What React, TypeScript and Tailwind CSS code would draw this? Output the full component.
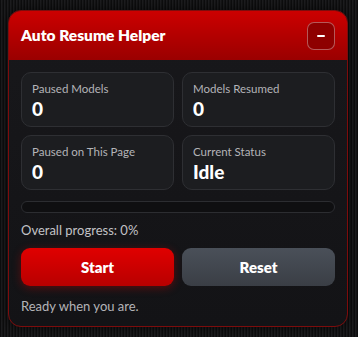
import React from "react";

function Stat({ label, value, big }: { label: string; value: string; big?: boolean }) {
  return (
    <div className="flex h-[55px] flex-col rounded-[10px] border border-[#2e2f33] bg-[#1c1d20] px-[10px] pt-[8px]">
      <div className="text-[11.5px] leading-[16px] text-[#b4b4b8]">{label}</div>
      <div className={`${big ? "text-[19px]" : "text-[19px]"} mt-[1px] font-black leading-[22px] text-white`}>{value}</div>
    </div>
  );
}

export default function App() {
  return (
    <div
      className="h-[337px] w-[358px] bg-[repeating-linear-gradient(90deg,#0d0d0e_0px,#0d0d0e_1px,#1d1d1f_1px,#1d1d1f_2px,#151516_2px,#151516_3px)] pt-[10px] pl-[8px]"
      style={{ fontFamily: "Lato, 'Noto Sans', sans-serif" }}
    >
      <div className="w-[340px] overflow-hidden rounded-[13px] border border-[#7d0c0c] bg-[linear-gradient(180deg,#18181b,#131316)] shadow-[0_0_12px_rgba(0,0,0,0.6)]">
        <div className="flex h-[49px] items-center justify-between bg-[linear-gradient(180deg,#cc0000,#9a0000)] pl-[12px] pr-[12px]">
          <div className="text-[15.5px] font-extrabold tracking-[0px] text-white">Auto Resume Helper</div>
          <div className="flex h-[28px] w-[28px] items-center justify-center rounded-[7px] border border-[rgba(255,255,255,0.35)] bg-[#8e0000]">
            <div className="h-[2px] w-[8px] rounded-sm bg-white" />
          </div>
        </div>
        <div className="flex flex-col px-[12px] pt-[12px] pb-[12px]">
          <div className="grid grid-cols-2 gap-[8px]">
            <Stat label="Paused Models" value="0" />
            <Stat label="Models Resumed" value="0" />
            <Stat label="Paused on This Page" value="0" />
            <Stat label="Current Status" value="Idle" big />
          </div>
          <div className="mt-[11px] h-[12px] rounded-full border border-[#2c2d31] bg-[#0f0f11]" />
          <div className="mt-[9px] text-[13px] leading-[16px] text-[#c2c2c6]">Overall progress: 0%</div>
          <div className="mt-[10px] grid grid-cols-2 gap-[8px]">
            <button className="h-[38px] rounded-[9px] bg-[linear-gradient(180deg,#e00000,#b80000)] text-[15px] font-extrabold text-white shadow-[0_2px_8px_rgba(220,0,0,0.35)]">
              Start
            </button>
            <button className="h-[38px] rounded-[9px] bg-[linear-gradient(180deg,#4a5059,#3a3e45)] text-[15px] font-extrabold text-white">
              Reset
            </button>
          </div>
          <div className="mt-[12px] text-[13px] leading-[16px] text-[#b4b4b8]">Ready when you are.</div>
        </div>
      </div>
    </div>
  );
}
